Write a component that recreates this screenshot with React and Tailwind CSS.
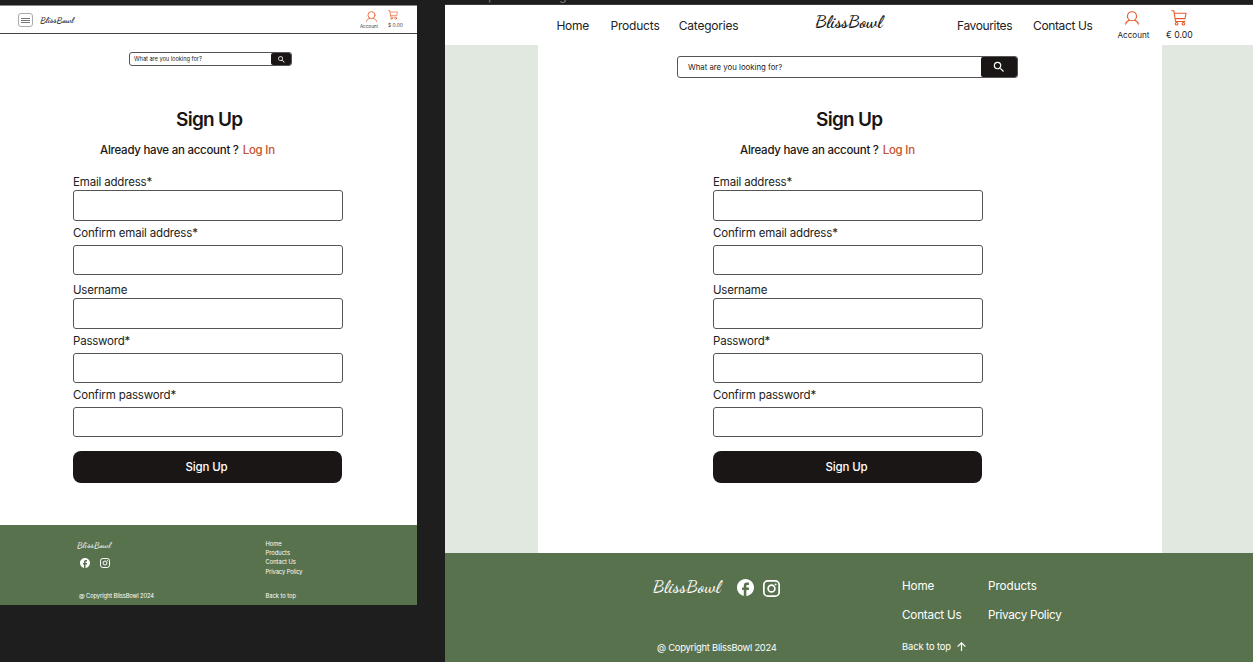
import React from "react";

const SEARCH_PATH =
  "M15.5 14h-.79l-.28-.27A6.471 6.471 0 0 0 16 9.5 6.5 6.5 0 1 0 9.5 16c1.61 0 3.09-.59 4.23-1.57l.27.28v.79l5 4.99L20.49 19l-4.99-5zm-6 0C7.01 14 5 11.99 5 9.5S7.01 5 9.5 5 14 7.01 14 9.5 11.99 14 9.5 14z";

function SearchIcon({ className }) {
  return (
    <svg viewBox="0 0 24 24" fill="currentColor" className={className}>
      <path d={SEARCH_PATH} />
    </svg>
  );
}

function UserIcon({ className }) {
  return (
    <svg viewBox="0 0 14 14" fill="none" stroke="currentColor" strokeWidth="1.15" strokeLinecap="round" className={className}>
      <circle cx="7" cy="5.2" r="4.5" />
      <path d="M.6 13.2c.5-2 2-3.4 3.9-3.9M13.4 13.2c-.5-2-2-3.4-3.9-3.9" />
    </svg>
  );
}

function CartIcon({ className }) {
  return (
    <svg viewBox="0 0 17 17" fill="none" stroke="currentColor" strokeWidth="1.15" strokeLinecap="round" strokeLinejoin="round" className={className}>
      <path d="M.8 .8H3L4.8 12.2H14.6M3.5 3.4H16L14.9 9.2H4.4" />
      <circle cx="6" cy="14.6" r="1.4" />
      <circle cx="13.2" cy="14.6" r="1.4" />
    </svg>
  );
}

function FacebookIcon({ className }) {
  return (
    <svg viewBox="2 2 20 20" fill="currentColor" className={className}>
      <path d="M22 12c0-5.52-4.48-10-10-10S2 6.48 2 12c0 4.84 3.44 8.87 8 9.8V15H8v-3h2V9.5C10 7.57 11.57 6 13.5 6H16v3h-2c-.55 0-1 .45-1 1v2h3v3h-3v6.95c5.05-.5 9-4.76 9-9.95z" />
    </svg>
  );
}

function InstagramIcon({ className }) {
  return (
    <svg viewBox="0 0 18 18" fill="none" stroke="currentColor" strokeWidth="1.8" className={className}>
      <rect x=".9" y=".9" width="16.2" height="16.2" rx="4.2" />
      <circle cx="9" cy="9" r="3.6" />
      <circle cx="13.4" cy="4.6" r="1" fill="currentColor" stroke="none" />
    </svg>
  );
}

function Field({ label, labelClass, boxClass }) {
  return (
    <label className="block">
      <span className={"block h-4 text-[11.5px] leading-4 text-[#222] " + labelClass}>{label}</span>
      <span className={"block w-[270px] rounded-[3px] border border-[#555] bg-white " + boxClass} />
    </label>
  );
}

function SignUpForm() {
  return (
    <form className="w-[270px]">
      <h1 className="ml-[103px] h-6 text-[19px] font-semibold leading-6 tracking-[-0.72px]">Sign Up</h1>
      <p className="ml-[27px] mt-[10px] flex h-4 gap-[4px] text-[11.5px] font-medium leading-4">
        <span className="tracking-[-0.26px]">Already have an account ?</span>
        <a className="tracking-[-0.25px] text-[#c8522f]">Log In</a>
      </p>
      <div className="mt-[16px]">
        <Field label="Email address*" labelClass="tracking-[-0.18px]" boxClass="h-[31px]" />
      </div>
      <div className="mt-[4px]">
        <Field label="Confirm email address*" labelClass="tracking-[-0.16px]" boxClass="mt-1 h-[30px]" />
      </div>
      <div className="mt-[7px]">
        <Field label="Username" labelClass="tracking-[-0.22px]" boxClass="h-[31px]" />
      </div>
      <div className="mt-[4px]">
        <Field label="Password*" labelClass="tracking-[-0.21px]" boxClass="mt-1 h-[30px]" />
      </div>
      <div className="mt-[4px]">
        <Field label="Confirm password*" labelClass="tracking-[-0.16px]" boxClass="mt-1 h-[30px]" />
      </div>
      <button type="button" className="mt-[14px] block h-[32px] w-[269px] rounded-[8px] bg-[#1a1615] pr-[2px] text-[11.5px] font-medium leading-[32px] tracking-[-0.15px] text-white">
        Sign Up
      </button>
    </form>
  );
}

function Logo({ className }) {
  return (
    <span className={"block whitespace-nowrap font-['Dancing_Script','Liberation_Serif',cursive] " + className}>BlissBowl</span>
  );
}

function MobileFrame() {
  return (
    <section className="mt-[5px] flex h-[600px] w-[417px] shrink-0 flex-col border-t border-[#8a8a8a] bg-white">
      <header className="flex h-[28px] shrink-0 items-start border-b border-[#444] pl-[18px]">
        <div className="mt-[7px] flex h-[14px] w-[15px] flex-col items-center justify-center gap-[1px] rounded-[3px] border border-[#aaa]">
          <i className="h-px w-[9px] bg-[#777]" />
          <i className="h-px w-[9px] bg-[#777]" />
          <i className="h-px w-[9px] bg-[#777]" />
        </div>
        <Logo className="ml-[7px] mt-[9px] w-[35px] text-[9px] font-bold leading-[12px] text-[#1a1615]" />
        <div className="ml-[285px] mt-[5px] flex w-[18px] flex-col items-center">
          <UserIcon className="ml-[4px] h-[11px] w-[11px] text-[#e8673a]" />
          <span className="mt-[2px] text-[4.6px] leading-[6px] text-[#444]">Account</span>
        </div>
        <div className="ml-[10px] mt-[4px] w-[16px]">
          <CartIcon className="h-[10px] w-[10px] text-[#e8673a]" />
          <span className="mt-[1px] block whitespace-nowrap text-[4.9px] leading-[8px] text-[#444]">$ 0.00</span>
        </div>
      </header>
      <main className="flex h-[490.5px] shrink-0 flex-col">
        <div className="ml-[129px] mt-[18px] flex h-[14px] w-[163px] overflow-hidden rounded-[3px] border border-[#555]">
          <span className="w-[141px] pl-[4px] text-[5.7px] leading-[12px] tracking-[-0.04px] text-[#222]">What are you looking for?</span>
          <span className="flex flex-1 items-center justify-center rounded-l-[2px] bg-[#1a1615] text-white">
            <SearchIcon className="h-[9px] w-[9px]" />
          </span>
        </div>
        <div className="ml-[73px] mt-[42px]">
          <SignUpForm />
        </div>
      </main>
      <footer className="flex flex-1 bg-[#58724d] text-[5.8px] leading-[9.2px] text-white">
        <div className="ml-[77px] w-[188.5px]">
          <Logo className="mt-[15px] text-[9px] font-medium leading-[12px] tracking-[0.15px]" />
          <div className="ml-[3px] mt-[6px] flex gap-[10px]">
            <FacebookIcon className="h-[10px] w-[10px]" />
            <InstagramIcon className="h-[10px] w-[10px]" />
          </div>
          <p className="ml-[2px] mt-[23px] tracking-[-0.11px]">@ Copyright BlissBowl 2024</p>
        </div>
        <nav className="mt-[14.5px] flex flex-col">
          <a>Home</a>
          <a>Products</a>
          <a className="tracking-[-0.02px]">Contact Us</a>
          <a className="tracking-[-0.1px]">Privacy Policy</a>
          <a className="mt-[15px] tracking-[-0.05px]">Back to top</a>
        </nav>
      </footer>
    </section>
  );
}

function DesktopFrame() {
  return (
    <section className="flex h-[662px] w-[808px] shrink-0 flex-col bg-[#e0e8df]">
      <div className="flex h-[5px] w-full shrink-0 items-start gap-[36px] overflow-hidden border-b border-[#3a3a3a] bg-[#1e1e1e] text-[13px] leading-[13px] text-[#777]">
        <span className="-mt-[11px]">Desktop</span>
        <span className="-mt-[11px]">Design</span>
      </div>
      <header className="flex h-[40px] shrink-0 items-start whitespace-nowrap bg-white pl-[111.5px] text-[12px] leading-4 text-[#222]">
        <a className="mt-[13px] w-[54px] tracking-[-0.3px]">Home</a>
        <a className="mt-[13px] w-[68.3px] tracking-[-0.2px]">Products</a>
        <a className="mt-[13px] w-[136.2px] tracking-[-0.23px]">Categories</a>
        <Logo className="mt-[5px] w-[142px] text-[18px] font-bold leading-[22px] tracking-[0px] text-[#1a1615]" />
        <a className="mt-[13px] w-[76px] tracking-[-0.37px]">Favourites</a>
        <a className="mt-[13px] w-[84.5px] tracking-[-0.36px]">Contact Us</a>
        <div className="mt-[6px] flex w-[32px] flex-col items-center">
          <UserIcon className="mr-[2px] h-[14px] w-[14px] text-[#e8592a]" />
          <span className="mt-[5px] text-[8.1px] leading-[10px]">Account</span>
        </div>
        <div className="ml-[16.5px] mt-[5px]">
          <CartIcon className="ml-[5px] h-[16px] w-[16px] text-[#e8592a]" />
          <span className="mt-[4px] block text-[8.7px] leading-[10px]">€ 0.00</span>
        </div>
      </header>
      <main className="ml-[93px] h-[508px] w-[624px] shrink-0 bg-white">
        <div className="ml-[139px] flex h-[33px] w-[341px] items-end">
          <div className="flex h-[22px] flex-1 overflow-hidden rounded-[3px] border border-[#555]">
            <span className="w-[303px] pl-[10px] text-[7.8px] leading-[20px] text-[#222]">What are you looking for?</span>
            <span className="flex flex-1 items-center justify-center rounded-l-[2px] bg-[#1a1615] pr-[1px] text-white">
              <SearchIcon className="h-[14px] w-[14px]" />
            </span>
          </div>
        </div>
        <div className="ml-[175px] pt-[30px]">
          <SignUpForm />
        </div>
      </main>
      <footer className="flex flex-1 whitespace-nowrap bg-[#58724d] pl-[208px] text-[11.7px] leading-4 text-white">
        <div className="w-[249px]">
          <div className="mt-[22px] flex items-start">
            <Logo className="w-[84px] text-[18px] font-medium leading-[22px] tracking-[0.25px]" />
            <FacebookIcon className="mt-[4px] h-[17px] w-[17px]" />
            <InstagramIcon className="ml-[9px] mt-[5px] h-[17px] w-[17px]" />
          </div>
          <p className="ml-[4px] mt-[44px] text-[9.4px] leading-[14px] tracking-[-0.24px]">@ Copyright BlissBowl 2024</p>
        </div>
        <nav>
          <div className="mt-[25px] grid grid-cols-[86px_auto] gap-y-[13px]">
            <a className="tracking-[-0.12px]">Home</a>
            <a className="tracking-[-0.05px]">Products</a>
            <a className="tracking-[-0.2px]">Contact Us</a>
            <a className="tracking-[-0.28px]">Privacy Policy</a>
          </div>
          <a className="mt-[17px] flex items-center gap-[6px] text-[9.4px] leading-[14px] tracking-[-0.1px]">
            Back to top
            <svg viewBox="0 0 9 9" className="mb-[2px] h-[9px] w-[9px]" fill="none" stroke="currentColor" strokeWidth="1.2">
              <path d="M4.5 9V.8M.6 4.6 4.5.8l3.9 3.8" />
            </svg>
          </a>
        </nav>
      </footer>
    </section>
  );
}

export default function App() {
  return (
    <div className="flex h-[662px] w-[1253px] items-start gap-[28px] overflow-hidden bg-[#1e1e1e] font-['Inter',sans-serif] text-[#1a1615]">
      <MobileFrame />
      <DesktopFrame />
    </div>
  );
}
